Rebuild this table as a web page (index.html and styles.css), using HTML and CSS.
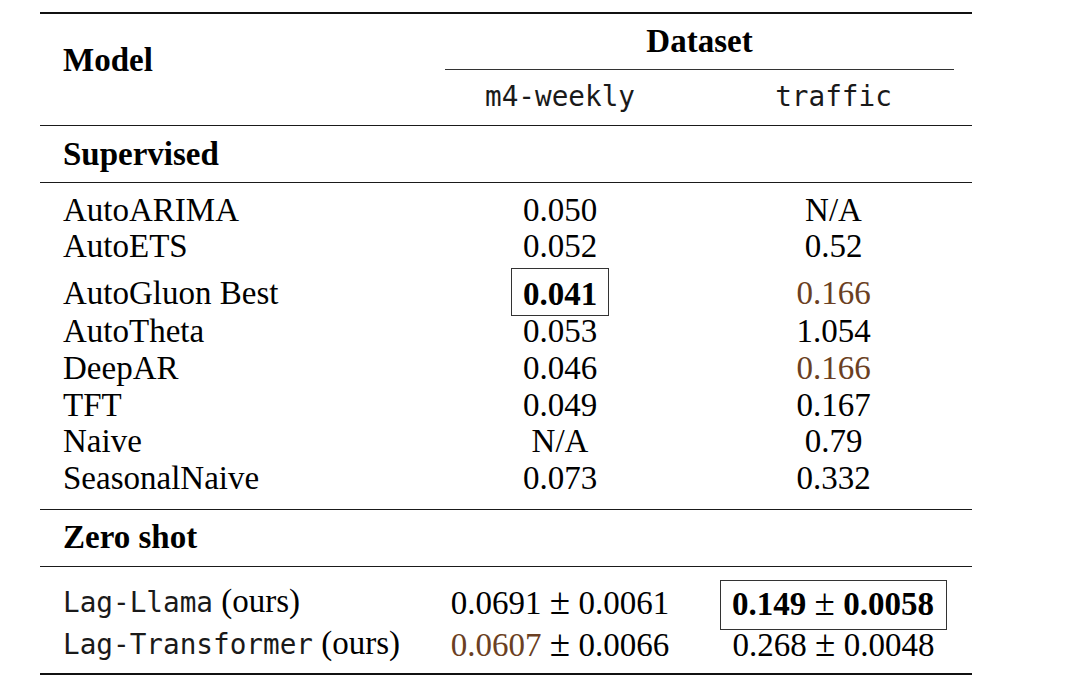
FILE: index.html
```html
<!DOCTYPE html>
<html>
<head>
<meta charset="utf-8">
<link rel="stylesheet" href="styles.css">
</head>
<body>
<div class="table">
  <div class="rule thick"></div>
  <div class="head">
    <div class="model b">Model</div>
    <div class="dataset b">Dataset</div>
    <div class="dcol c2 mono">m4-weekly</div>
    <div class="dcol c3 mono">traffic</div>
  </div>
  <div class="rule"></div>
  <div class="section b">Supervised</div>
  <div class="rule"></div>
  <div class="body sup">
    <div class="row"><span>AutoARIMA</span><span class="c2">0.050</span><span class="c3">N/A</span></div>
    <div class="row"><span>AutoETS</span><span class="c2">0.052</span><span class="c3">0.52</span></div>
    <div class="row tall"><span>AutoGluon Best</span><span class="c2"><span class="boxed b">0.041</span></span><span class="c3 brown">0.166</span></div>
    <div class="row"><span>AutoTheta</span><span class="c2">0.053</span><span class="c3">1.054</span></div>
    <div class="row"><span>DeepAR</span><span class="c2">0.046</span><span class="c3 brown">0.166</span></div>
    <div class="row"><span>TFT</span><span class="c2">0.049</span><span class="c3">0.167</span></div>
    <div class="row"><span>Naive</span><span class="c2">N/A</span><span class="c3">0.79</span></div>
    <div class="row"><span>SeasonalNaive</span><span class="c2">0.073</span><span class="c3">0.332</span></div>
  </div>
  <div class="rule"></div>
  <div class="section b">Zero shot</div>
  <div class="rule"></div>
  <div class="body zero">
    <div class="row"><span><span class="mono">Lag-Llama</span> (ours)</span><span class="c2">0.0691 <span class="pm">±</span> 0.0061</span><span class="c3"><span class="boxed2"><b>0.149</b> <span class="pm">±</span> <b>0.0058</b></span></span></div>
    <div class="row gap"><span><span class="mono">Lag-Transformer</span> (ours)</span><span class="c2"><span class="brown">0.0607</span> <span class="pm">±</span> 0.0066</span><span class="c3">0.268 <span class="pm">±</span> 0.0048</span></div>
  </div>
  <div class="rule thick"></div>
</div>
</body>
</html>
```

FILE: styles.css
```css
html, body {
  margin: 0;
  padding: 0;
  background: #ffffff;
}

body {
  font-family: "Liberation Serif", "Times New Roman", serif;
  font-size: 33px;
  color: #000;
}

.table {
  width: 932px;
  margin-left: 40px;
  padding-top: 12px;
}

.rule {
  height: 1px;
  background: #1a1a1a;
}

.rule.thick {
  height: 2px;
  background: #111;
}

.b {
  font-weight: bold;
}

.mono {
  font-family: "DejaVu Sans Mono", "Liberation Mono", monospace;
  font-size: 27.7px;
  line-height: 1;
  color: #1a1a1a;
}

.pm {
  font-size: 37px;
  line-height: 1;
  font-weight: normal;
}

.head {
  display: grid;
  grid-template-columns: 405px 250px 277px;
  grid-template-rows: auto auto;
  line-height: 36.7px;
}

.model {
  grid-column: 1;
  grid-row: 1 / span 2;
  padding: 27.5px 0 0 23px;
}

.dataset {
  grid-column: 2 / span 2;
  grid-row: 1;
  text-align: center;
  margin-right: 18px;
  padding: 8.5px 0 9.8px;
  border-bottom: 1px solid #333;
}

.dcol {
  grid-row: 2;
  line-height: 36.7px;
  text-align: center;
  padding: 9px 0 9.3px;
}

.head .c2 {
  grid-column: 2;
  padding-right: 20px;
}

.head .c3 {
  grid-column: 3;
}

.section {
  line-height: 36.7px;
  padding: 9.5px 0 9.8px 23px;
}

.body.sup {
  padding: 8.5px 0 12px;
}

.body.zero {
  padding: 16.5px 0 10.8px;
}

.row {
  display: grid;
  grid-template-columns: 405px 250px 277px;
  line-height: 36.7px;
  height: 36.7px;
  white-space: nowrap;
}

.row > span:first-child {
  padding-left: 23px;
}

.row .c2 {
  text-align: center;
  padding-right: 20px;
}

.row .c3 {
  text-align: center;
}

.row.tall {
  padding-top: 10.6px;
  padding-bottom: 1.2px;
}

.row.gap {
  margin-top: 5.3px;
}

.brown {
  color: #6b3f23;
}

.boxed {
  border: 1px solid #333;
  padding: 6.6px 11px 3.9px;
}

.boxed2 {
  border: 1px solid #333;
  padding: 4.6px 12px 7.9px 11px;
}
```
